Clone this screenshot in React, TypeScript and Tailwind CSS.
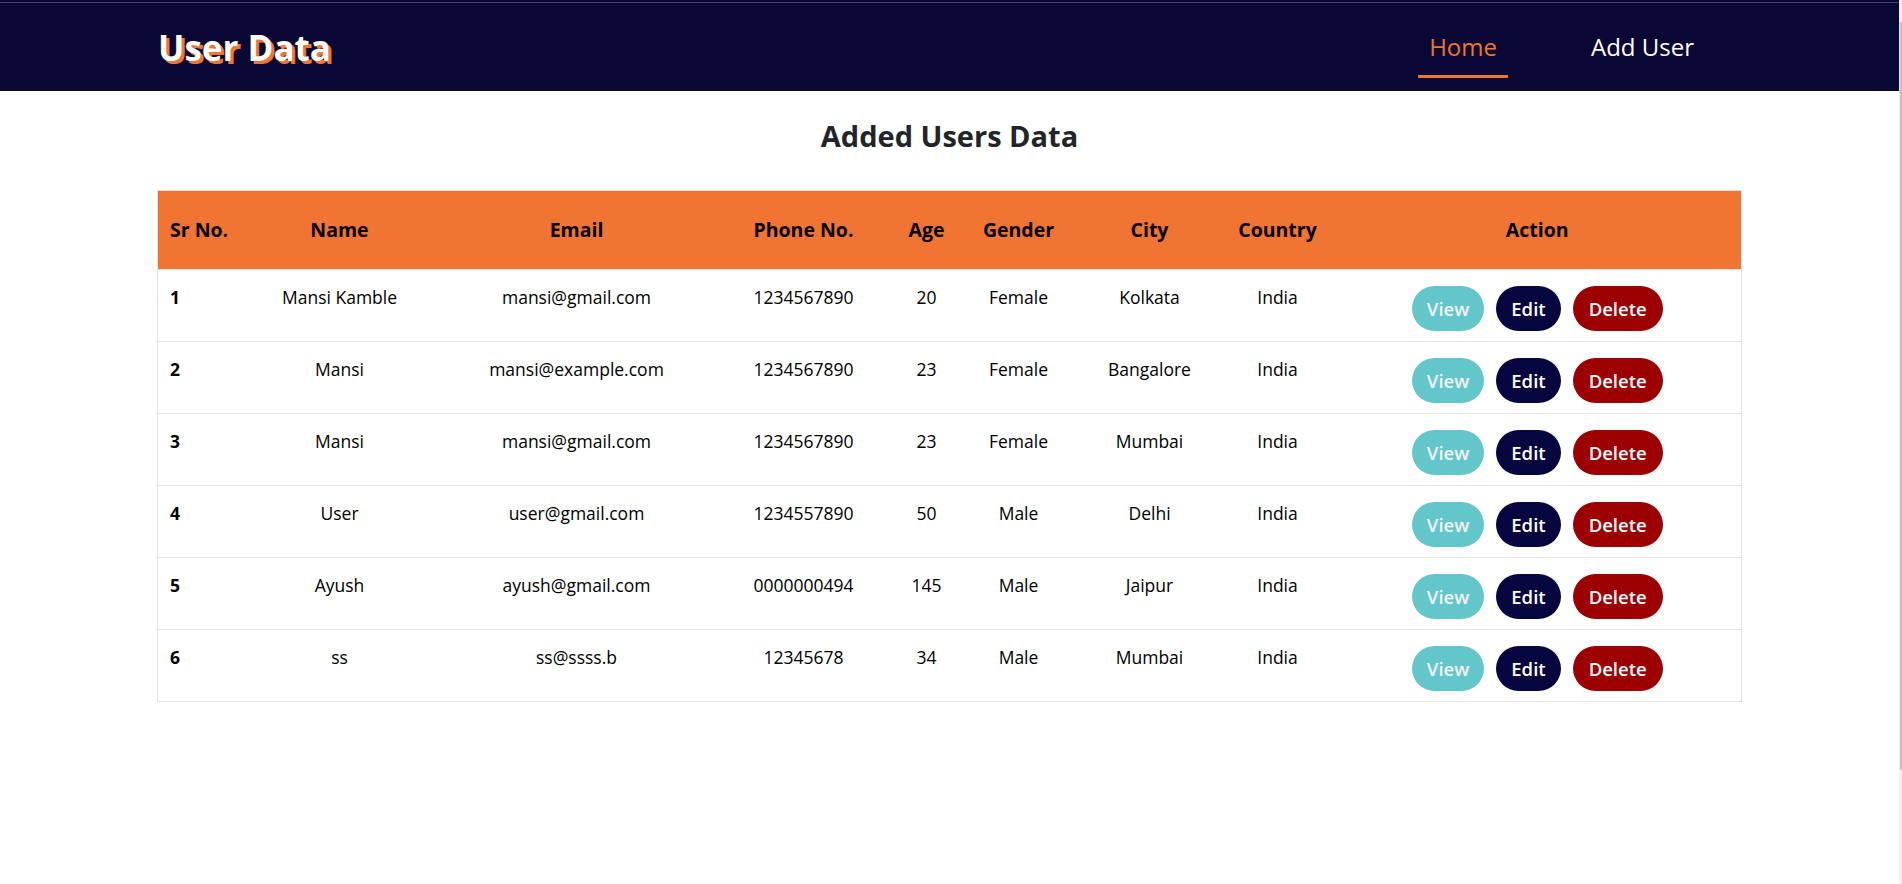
import React from 'react';

type User = {
  name: string;
  email: string;
  phone: string;
  age: number;
  gender: string;
  city: string;
  country: string;
};

const users: User[] = [
  { name: 'Mansi Kamble', email: 'mansi@gmail.com', phone: '1234567890', age: 20, gender: 'Female', city: 'Kolkata', country: 'India' },
  { name: 'Mansi', email: 'mansi@example.com', phone: '1234567890', age: 23, gender: 'Female', city: 'Bangalore', country: 'India' },
  { name: 'Mansi', email: 'mansi@gmail.com', phone: '1234567890', age: 23, gender: 'Female', city: 'Mumbai', country: 'India' },
  { name: 'User', email: 'user@gmail.com', phone: '1234557890', age: 50, gender: 'Male', city: 'Delhi', country: 'India' },
  { name: 'Ayush', email: 'ayush@gmail.com', phone: '0000000494', age: 145, gender: 'Male', city: 'Jaipur', country: 'India' },
  { name: 'ss', email: 'ss@ssss.b', phone: '12345678', age: 34, gender: 'Male', city: 'Mumbai', country: 'India' },
];

const headers = ['Name', 'Email', 'Phone No.', 'Age', 'Gender', 'City', 'Country'];

const Navbar = () => (
  <header className="bg-[#0a0834] pt-[2px]">
    <div className="border-t border-[#453c72] h-[89px] flex justify-between px-[158px]">
      <div className="self-center text-[35px] font-bold text-white leading-none [text-shadow:3px_3px_0_#f07432]">
        User Data
      </div>
      <nav className="flex gap-[72px] mr-[36px] text-[24px] leading-[32px]">
        <a className="pt-[28px] pb-[12px] px-[11px] border-b-[3px] border-[#f07432] text-[#f07432] h-fit">Home</a>
        <a className="pt-[28px] pb-[12px] px-[11px] border-b-[3px] border-transparent text-white h-fit">Add User</a>
      </nav>
    </div>
  </header>
);

const UserTable = () => (
  <table className="table-fixed border-collapse w-[1584px] mx-auto mt-[35px] border border-[#dee2e6] text-[#212529]">
    <colgroup>
      <col className="w-[82px]" />
      <col className="w-[200px]" />
      <col className="w-[274px]" />
      <col className="w-[180px]" />
      <col className="w-[66px]" />
      <col className="w-[118px]" />
      <col className="w-[144px]" />
      <col className="w-[112px]" />
      <col className="w-[408px]" />
    </colgroup>
    <thead>
      <tr className="bg-[#f07432] h-[79px] text-[19.5px] font-bold text-black">
        <th className="text-left pl-3 whitespace-nowrap">Sr No.</th>
        {headers.map((h) => (
          <th key={h} className="text-center whitespace-nowrap">{h}</th>
        ))}
        <th className="text-center">Action</th>
      </tr>
    </thead>
    <tbody className="text-[17.5px] leading-[24px]">
      {users.map((u, i) => (
        <tr key={i} className="border-t border-[#dee2e6]">
          <td className="align-top pl-3 pt-[15px] font-bold text-black">{i + 1}</td>
          <td className="align-top text-center pt-[15px] text-black">{u.name}</td>
          <td className="align-top text-center pt-[15px] text-black">{u.email}</td>
          <td className="align-top text-center pt-[15px] text-black">{u.phone}</td>
          <td className="align-top text-center pt-[15px] text-black">{u.age}</td>
          <td className="align-top text-center pt-[15px] text-black">{u.gender}</td>
          <td className="align-top text-center pt-[15px] text-black">{u.city}</td>
          <td className="align-top text-center pt-[15px] text-black">{u.country}</td>
          <td className="align-top pt-[16px] pb-[10px]">
            <div className="flex justify-center gap-[12px] text-[18.5px] font-semibold text-white">
              <button className="h-[45px] px-[15px] rounded-full bg-[#62c6cb] text-[#f4f4f4]">View</button>
              <button className="h-[45px] px-[15px] rounded-full bg-[#060640]">Edit</button>
              <button className="h-[45px] px-[16px] rounded-full bg-[#9c0000]">Delete</button>
            </div>
          </td>
        </tr>
      ))}
    </tbody>
  </table>
);

export default function App() {
  return (
    <div className="min-h-screen bg-white font-['Open_Sans',sans-serif]">
      <div className="mr-[3px]">
        <Navbar />
        <main className="pb-10">
          <h2 className="text-center text-[29px] font-bold leading-[38px] mt-[26px] text-[#212529]">
            Added Users Data
          </h2>
          <UserTable />
        </main>
      </div>
      {/* scrollbar strip on the right edge */}
      <div className="fixed top-0 right-0 w-[3px] h-screen bg-[#f1f1f1]">
        <div className="absolute top-[22px] left-[1px] w-[2px] h-[748px] bg-[#c1c1c1]" />
      </div>
    </div>
  );
}
